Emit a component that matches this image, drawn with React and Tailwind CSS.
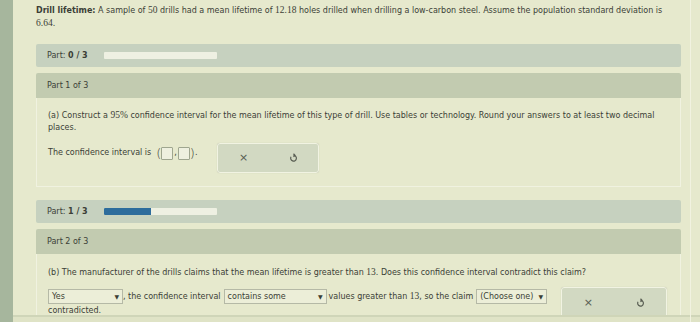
const font = { fontFamily: '"DejaVu Sans", Verdana, sans-serif' };

function Num({ children }) {
    return <span className="font-['Liberation_Serif',serif] text-[9.5px]">{children}</span>;
}

function ProgressBar({ done, total, fill }) {
    return (
        <div className="h-[23px] bg-[#c6d1bf] rounded-[2px] flex items-center pl-[11px]">
            <span className="w-[57px]">Part: <b>{done} / {total}</b></span>
            <div className="w-[113px] h-[7px] bg-[#eef0e2] rounded-[1px] overflow-hidden">
                <div className="h-full bg-[#2d6c9c]" style={{ width: fill }}></div>
            </div>
        </div>
    );
}

function PartHeader({ label }) {
    return (
        <div className="h-[25px] bg-[#c2cbb0] flex items-center pl-[11px] rounded-t-[2px]">
            {label}
        </div>
    );
}

function ActionBox({ className }) {
    return (
        <div className={"shrink-0 border border-[#f1f3e2] rounded-[3px] bg-[#d2d9c2] shadow-[0_0_1px_#b9bfa8] flex items-center justify-around text-[#585d52] " + className}>
            <span className="text-[11px]">×</span>
            <svg width="9" height="10" viewBox="0 0 10 11" fill="none" stroke="#585d52" strokeWidth="1.3">
                <path d="M2.2 4.2a3.2 3.2 0 1 0 2.8-1.7"/>
                <path d="M5 0.8 6.6 2.5 5 4.1"/>
            </svg>
        </div>
    );
}

function Select({ label, className }) {
    return (
        <span className={"inline-flex items-center justify-between h-[15px] border border-[#b5b9a6] bg-[#eceed8] px-[3px] align-middle " + className}>
            <span>{label}</span>
            <span className="text-[6px]">▼</span>
        </span>
    );
}

export default function App() {
    return (
        <div className="w-[700px] h-[322px] overflow-hidden flex bg-[#e6e9cd] text-[#3b3e36] text-[8px] leading-[12px]" style={font}>
            <div className="w-[13px] bg-[#a6b69d] shrink-0"></div>
            <div className="flex-1 flex flex-col relative">
                <div className="pl-[23px] pr-[19px] pt-[4px]">
                    <div className="whitespace-nowrap"><b>Drill lifetime:</b> A sample of <Num>50</Num> drills had a mean lifetime of <Num>12.18</Num> holes drilled when drilling a low-carbon steel. Assume the population standard deviation is</div>
                    <div><Num>6.64</Num>.</div>

                    <div className="mt-[14px]">
                        <ProgressBar done={0} total={3} fill="0%" />
                    </div>

                    <div className="mt-[6px]">
                        <PartHeader label="Part 1 of 3" />
                        <div className="h-[89px] border border-t-0 border-[#f0f2e0] pl-[11px] pt-[11px]">
                            <div className="whitespace-nowrap">(a) Construct a <Num>95%</Num> confidence interval for the mean lifetime of this type of drill. Use tables or technology. Round your answers to at least two decimal</div>
                            <div>places.</div>
                            <div className="flex items-center h-[12px] mt-[13px]">
                                <span>The confidence interval is</span>
                                <span className="ml-[5px] text-[13px] leading-none font-light">(</span>
                                <span className="shrink-0 w-[12px] h-[13px] border border-[#9fa68f] bg-[#eef0df] rounded-[1px]"></span>
                                <span className="mx-[1px]">,</span>
                                <span className="shrink-0 w-[12px] h-[13px] border border-[#9fa68f] bg-[#eef0df] rounded-[1px]"></span>
                                <span className="text-[13px] leading-none font-light">)</span>
                                <span>.</span>
                                <ActionBox className="ml-[20px] w-[102px] h-[30px] mt-[9px]" />
                            </div>
                        </div>
                    </div>

                    <div className="mt-[13px]">
                        <ProgressBar done={1} total={3} fill="42%" />
                    </div>

                    <div className="mt-[6px]">
                        <PartHeader label="Part 2 of 3" />
                        <div className="h-[80px] border border-t-0 border-[#f0f2e0] pl-[11px] pt-[12px]">
                            <div className="whitespace-nowrap">(b) The manufacturer of the drills claims that the mean lifetime is greater than <Num>13</Num>. Does this confidence interval contradict this claim?</div>
                            <div className="flex items-start mt-[10px]">
                                <div>
                                    <div className="flex items-center whitespace-nowrap">
                                        <Select label="Yes" className="w-[75px]" />
                                        <span>, the confidence interval</span>
                                        <Select label="contains some" className="w-[103px] ml-[3px]" />
                                        <span className="ml-[2px]">values greater than <Num>13</Num>, so the claim</span>
                                        <Select label="(Choose one)" className="w-[71px] ml-[3px]" />
                                    </div>
                                    <div className="mt-[1px]">contradicted.</div>
                                </div>
                                <ActionBox className="ml-[14px] w-[106px] h-[32px] -mt-[2px]" />
                            </div>
                        </div>
                    </div>
                </div>
                <div className="absolute left-0 right-0 top-[315px] h-[7px] bg-[#dfe3c6] border-t-[2px] border-[#cfd5b8]"></div>
                <div className="absolute right-[9px] top-0 bottom-0 w-[1px] bg-[#f1f2e0]"></div>
            </div>
        </div>
    );
}
